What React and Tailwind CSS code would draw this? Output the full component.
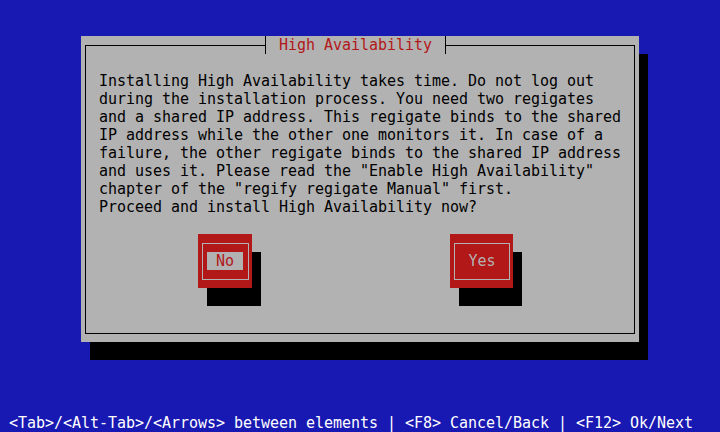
export default function App() {
  const lines = [
    "Installing High Availability takes time. Do not log out",
    "during the installation process. You need two regigates",
    "and a shared IP address. This regigate binds to the shared",
    "IP address while the other one monitors it. In case of a",
    "failure, the other regigate binds to the shared IP address",
    "and uses it. Please read the \"Enable High Availability\"",
    "chapter of the \"regify regigate Manual\" first.",
    "Proceed and install High Availability now?",
  ];
  return (
    <div
      className="w-[720px] h-[432px] bg-[#1818b2] flex flex-col overflow-hidden text-[15px] leading-[18px] tracking-[-0.03px]"
      style={{ fontFamily: '"DejaVu Sans Mono", "Liberation Mono", monospace' }}
    >
      <div className="ml-[81px] mt-[36px] w-[558px] h-[306px] bg-[#b2b2b2] shadow-[9px_18px_0_0_#000] pt-[9px] pl-[4px] pr-[4px] pb-[8px] flex">
        <div className="relative flex-1 border border-black pl-[13px] pt-[26px] text-black">
          <div className="absolute left-[179px] top-[-10px] w-[181px] h-[18px] bg-[#b2b2b2] border-l border-r border-black pl-[13px] text-[#b21818] whitespace-pre">
            High Availability
          </div>
          {lines.map((l, i) => (
            <div key={i} className="h-[18px] whitespace-pre">
              {l}
            </div>
          ))}
          <div className="flex mt-[18px]">
            <div className="ml-[99px] w-[54px] h-[54px] bg-[#b21818] shadow-[9px_18px_0_0_#000] pt-[9px] pl-[4px] pr-[3px] pb-[8px] flex">
              <div className="flex-1 border border-[#b2b2b2] pl-[4px] pt-[8px]">
                <div className="w-[36px] h-[18px] bg-[#b2b2b2] text-[#b21818] text-center">No</div>
              </div>
            </div>
            <div className="ml-[198px] w-[63px] h-[54px] bg-[#b21818] shadow-[9px_18px_0_0_#000] pt-[9px] pl-[4px] pr-[3px] pb-[8px] flex">
              <div className="flex-1 border border-[#b2b2b2] pt-[8px]">
                <div className="h-[18px] text-[#b2b2b2] text-center">Yes</div>
              </div>
            </div>
          </div>
        </div>
      </div>
      <div className="mt-auto h-[18px] pl-[9px] text-white whitespace-pre">
        {"<Tab>/<Alt-Tab>/<Arrows> between elements | <F8> Cancel/Back | <F12> Ok/Next"}
      </div>
    </div>
  );
}
